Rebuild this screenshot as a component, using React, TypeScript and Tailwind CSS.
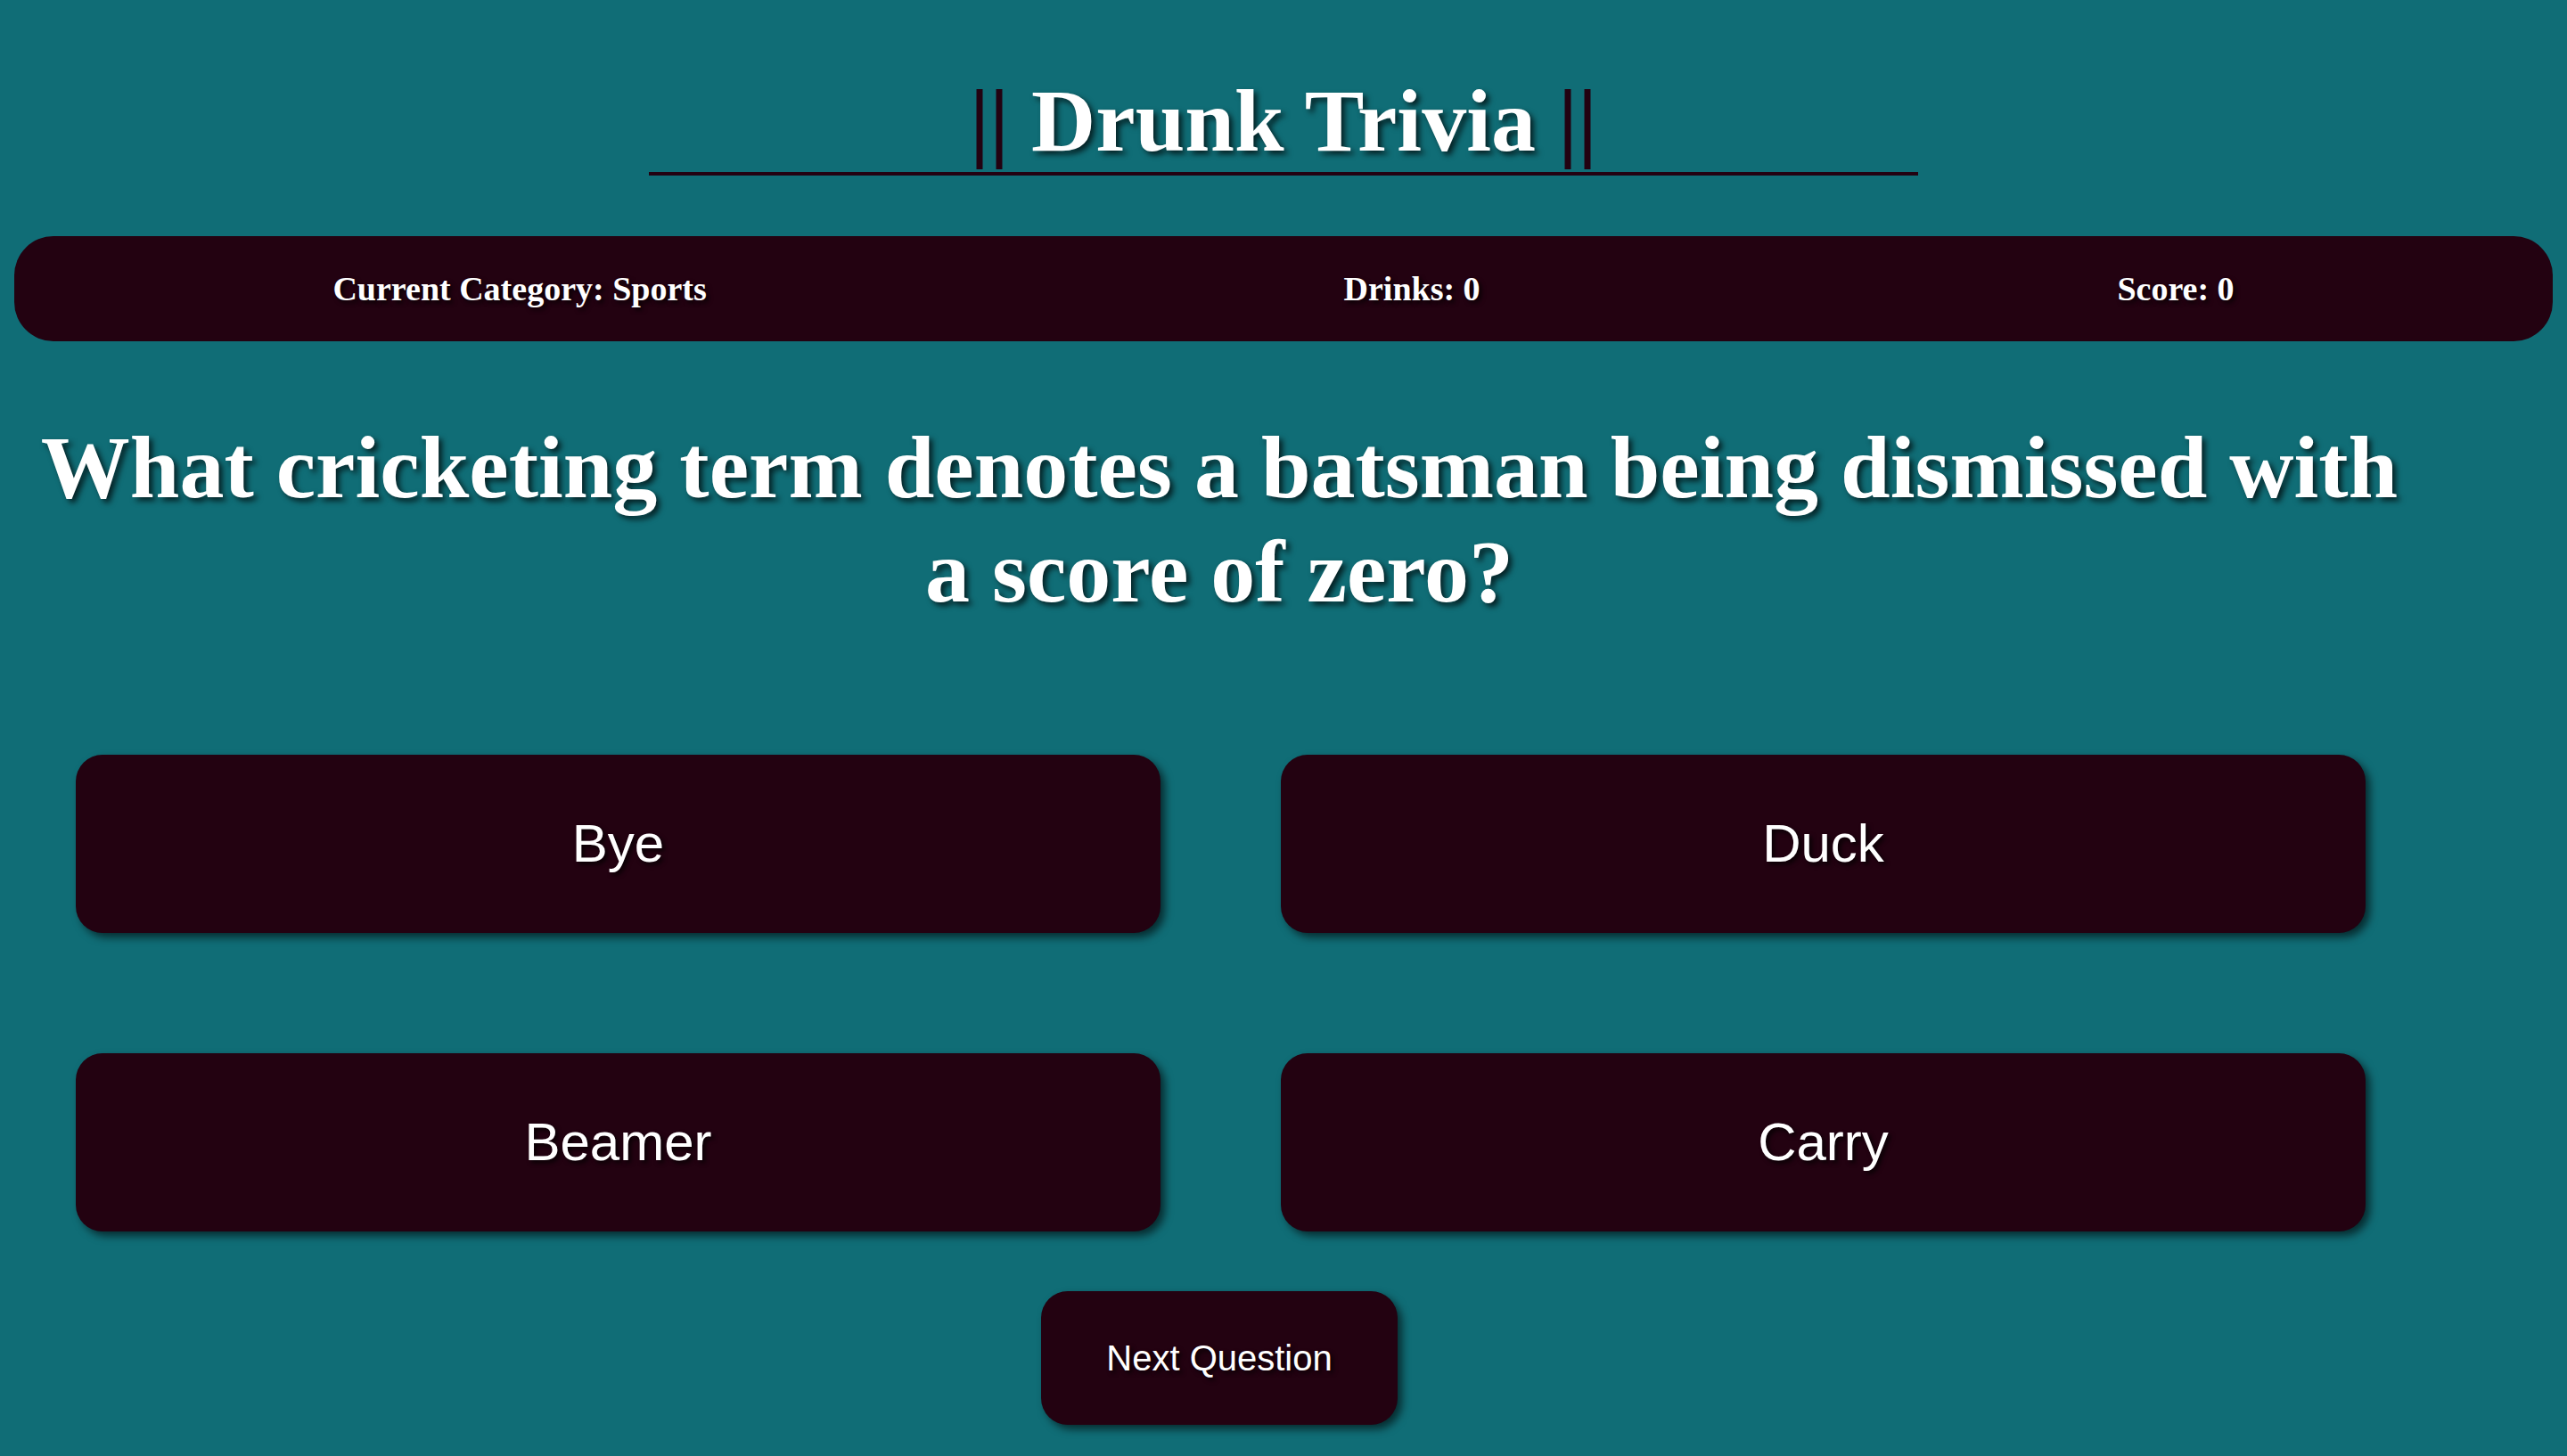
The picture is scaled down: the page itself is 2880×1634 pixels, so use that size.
import { useState } from 'react'

const answers = ['Bye', 'Duck', 'Beamer', 'Carry']

const serif = "font-['Liberation_Serif','Times_New_Roman',serif]"
const sans = "font-['Liberation_Sans',Arial,sans-serif]"

export default function App() {
  const [drinks] = useState(0)
  const [score] = useState(0)

  return (
    <div className="min-h-screen overflow-hidden bg-[#106d76] pt-[78px]">
      <h1
        className={`${serif} mx-auto w-[1424px] border-b-4 border-[#230211] text-center text-[100px] font-bold leading-[115px] text-white`}
      >
        <span className="text-[#230211]">||</span>{' '}
        <span className="[text-shadow:4px_4px_6px_rgba(0,0,0,0.7)]">
          Drunk Trivia
        </span>{' '}
        <span className="text-[#230211]">||</span>
      </h1>

      <div
        className={`${serif} mx-4 mt-[68px] flex h-[118px] items-center justify-around rounded-[44px] bg-[#230211] text-[38px] font-bold text-white [text-shadow:3px_3px_5px_rgba(0,0,0,0.8)]`}
      >
        <span>Current Category: Sports</span>
        <span>Drinks: {drinks}</span>
        <span>Score: {score}</span>
      </div>

      <h2
        className={`${serif} mt-[83px] w-[2736px] text-center text-[100px] font-bold leading-[117px] text-white [text-shadow:4px_4px_6px_rgba(0,0,0,0.7)]`}
      >
        What cricketing term denotes a batsman being dismissed with
        <br />a score of zero?
      </h2>

      <div className="mt-[147px] grid w-[2736px] grid-cols-2 gap-x-[135px] gap-y-[135px] pl-[85px] pr-[82px]">
        {answers.map((answer) => (
          <button
            key={answer}
            className={`${sans} flex h-[200px] items-center justify-center rounded-[30px] bg-[#230211] text-[60px] text-white shadow-[5px_5px_10px_rgba(0,0,0,0.6)] [text-shadow:3px_3px_5px_rgba(0,0,0,0.8)]`}
          >
            {answer}
          </button>
        ))}
      </div>

      <div className="mt-[67px] flex w-[2736px] justify-center">
        <button
          className={`${sans} h-[150px] w-[400px] rounded-[30px] bg-[#230211] text-[40px] text-white shadow-[5px_5px_10px_rgba(0,0,0,0.6)] [text-shadow:3px_3px_5px_rgba(0,0,0,0.8)]`}
        >
          Next Question
        </button>
      </div>
    </div>
  )
}
